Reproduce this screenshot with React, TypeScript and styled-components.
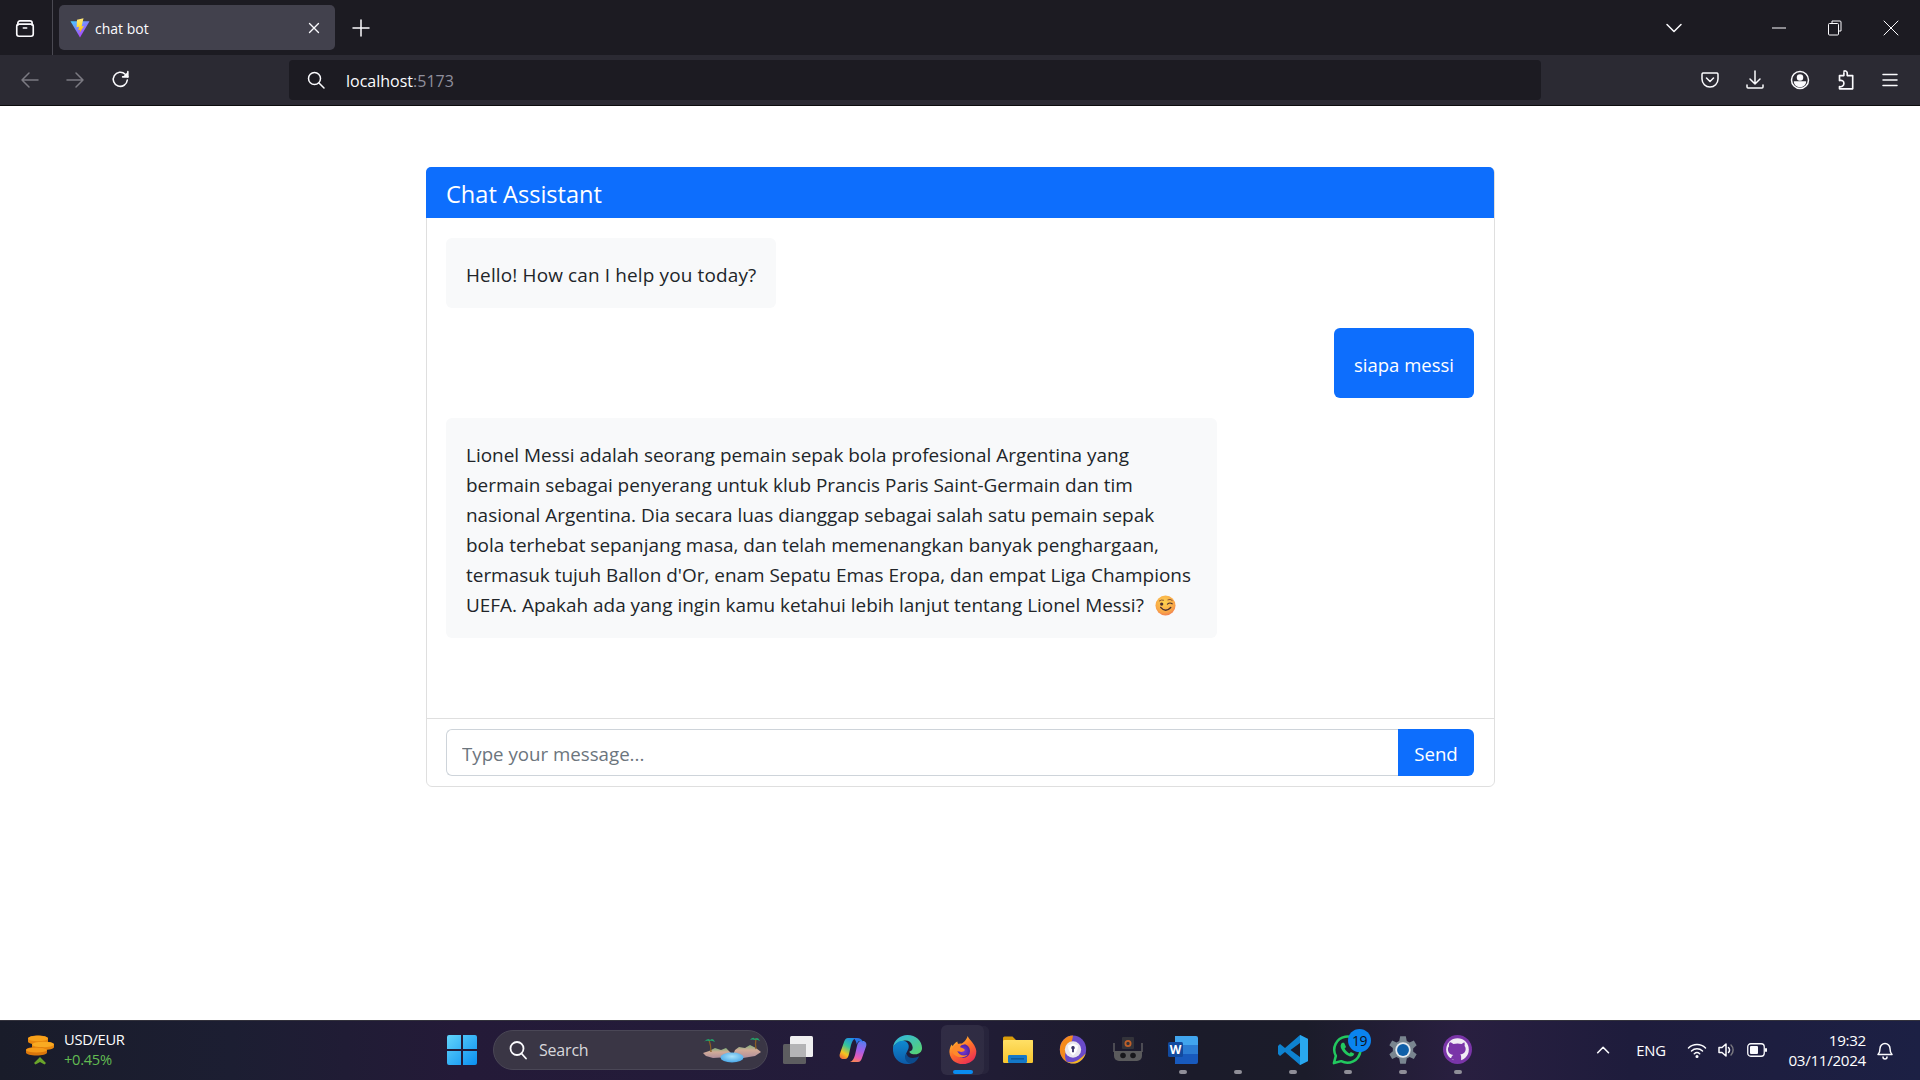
import React from "react";
import styled, { createGlobalStyle } from "styled-components";

const Global = createGlobalStyle`
  html, body { margin: 0; padding: 0; background: #fff; }
  * { box-sizing: border-box; }
  body { font-family: "Open Sans", "Liberation Sans", sans-serif; }
`;

const Screen = styled.div`
  width: 1920px; height: 1080px; display: flex; flex-direction: column; overflow: hidden;
`;

/* ---------- browser chrome ---------- */
const TabBar = styled.div`
  height: 55px; background: #1c1b22; display: flex; align-items: center; flex: none; color: #fbfbfe;
`;
const TabListButton = styled.div`
  width: 53px; height: 55px; display: flex; align-items: center; justify-content: center;
  border-right: 1px solid #4a4952; padding-right: 2px; flex: none;
`;
const Tab = styled.div`
  width: 276px; height: 45px; margin-left: 6px; background: #42414d; border-radius: 5px;
  display: flex; align-items: center; padding: 0 12px 0 11px; flex: none;
`;
const TabTitle = styled.span`
  font: 14px "Open Sans", sans-serif; margin: 2px 0 0 5px; flex: 1; color: #fbfbfe;
`;
const NewTab = styled.div`
  width: 44px; margin-left: 4px; display: flex; justify-content: center; flex: none;
`;
const TabSpacer = styled.div`flex: 1;`;
const WinButton = styled.div<{ $w: number }>`
  width: ${(p) => p.$w}px; display: flex; justify-content: center; flex: none;
`;
const Toolbar = styled.div`
  height: 51px; background: #2b2a33; display: flex; align-items: center; flex: none;
  border-bottom: 1px solid #0c0c0d; padding-bottom: 1px;
`;
const NavButton = styled.div<{ $w: number }>`
  width: ${(p) => p.$w}px; display: flex; justify-content: center; flex: none;
`;
const UrlBar = styled.div`
  width: 1252px; height: 40px; background: #1c1b22; border-radius: 4px; margin-left: 139px;
  display: flex; align-items: center; padding-left: 17px; flex: none;
`;
const UrlText = styled.span`
  margin: 2px 0 0 20px; font: 16px "Open Sans", sans-serif; color: #fbfbfe;
`;
const UrlPort = styled.span`color: #8f8f9d;`;
const ToolbarRight = styled.div`
  margin-left: auto; display: flex; align-items: center; padding-right: 8px;
`;

/* ---------- page ---------- */
const Page = styled.main`
  flex: 1; background: #fff; padding-top: 61px; display: flex; justify-content: center;
  align-items: flex-start; padding-left: 1px;
`;
const Card = styled.section`
  width: 1069px; border: 1px solid rgba(0,0,0,.125); border-radius: 6px;
  display: flex; flex-direction: column;
`;
const CardHeader = styled.header`
  height: 51px; background: #0d6efd; color: #fff; padding: 2px 20px 0;
  font-size: 23.6px; line-height: 51px; margin: -1px 0 0 -1px; border-radius: 5px 5px 0 0;
`;
const ChatBody = styled.div`
  height: 500px; padding: 20px 20px 20px 19px; display: flex; flex-direction: column; gap: 20px;
`;
const Bubble = styled.div<{ $user?: boolean; $wide?: boolean; $track?: number }>`
  align-self: ${(p) => (p.$user ? "flex-end" : "flex-start")};
  background: ${(p) => (p.$user ? "#0d6efd" : "#f8f9fa")};
  color: ${(p) => (p.$user ? "#fff" : "#212529")};
  padding: 22px 20px 18px; border-radius: 6px; font-size: ${(p) => (p.$user ? 18.5 : 18.95)}px; line-height: 30px;
  letter-spacing: ${(p) => p.$track ?? 0}px;
  white-space: nowrap; ${(p) => (p.$wide ? "width: 771px;" : "")}
`;
const Emoji = styled.svg`
  width: 21px; height: 21px; vertical-align: -4px; margin-left: 6px;
`;
const CardFooter = styled.footer`
  border-top: 1px solid rgba(0,0,0,.125); padding: 10px 20px 10px 19px; display: flex; height: 68px;
`;
const MessageInput = styled.input`
  flex: 1; height: 47px; border: 1px solid #ced4da; border-right: 0; border-radius: 6px 0 0 6px;
  padding: 2px 15px 0; font: 18.7px "Open Sans", sans-serif; outline: none; color: #212529; background: #fff;
  &::placeholder { color: #6c757d; opacity: 1; }
`;
const SendButton = styled.button`
  width: 76px; height: 47px; background: #0d6efd; color: #fff; border: 0; border-radius: 0 6px 6px 0;
  font: 18.7px "Open Sans", sans-serif; padding: 2px 0 0;
`;

/* ---------- taskbar ---------- */
const Taskbar = styled.footer`
  height: 60px; flex: none; display: flex; align-items: center; color: #fff; padding: 0 0 2px 20px;
  border-top: 1px solid #33323c;
  background: linear-gradient(90deg, #191c2a 0%, #1c1e32 12%, #241a38 24%, #231c3a 45%, #201c34 52%, #1b1b2a 62%, #1b1c2a 68%, #291f40 76%, #1e1c3c 85%, #1c2044 100%);
`;
const Widget = styled.div`
  width: 414px; display: flex; align-items: center; gap: 10px; flex: none; padding-left: 6px;
`;
const WidgetText = styled.div`
  display: flex; flex-direction: column; font: 14.7px/20px "Open Sans", sans-serif; letter-spacing: -.3px; margin-top: -1px;
`;
const WidgetDelta = styled.span`color: #62bb52;`;
const TaskSlot = styled.div<{ $active?: boolean }>`
  position: relative; width: 55px; height: 52px; display: flex; align-items: center; justify-content: center;
  flex: none; border-radius: 6px;
  ${(p) => p.$active ? "background: rgba(255,255,255,.07); width: 43px; height: 50px; margin: 0 6px; box-shadow: 6px 0 0 -1px rgba(255,255,255,.035);" : ""}
`;
const Indicator = styled.span<{ $active?: boolean }>`
  position: absolute; bottom: ${(p) => (p.$active ? 1 : 2)}px; left: 50%; transform: translateX(-50%);
  width: ${(p) => (p.$active ? 20 : 8)}px; height: 4px; border-radius: 2px;
  background: ${(p) => (p.$active ? "#0a8cf0" : "#8f8e98")};
`;
const Badge = styled.span`
  position: absolute; top: 5px; right: 4px; width: 23px; height: 23px; border-radius: 50%;
  background: #0a84ef; color: #101018; font: 14px/23px "Open Sans", sans-serif; text-align: center; letter-spacing: -.5px;
`;
const SearchPill = styled.div`
  width: 275px; height: 40px; border-radius: 20px; background: #3a3645; border: 1px solid #4a4756;
  display: flex; align-items: center; padding: 0 6px 0 14px; margin: 0 2px 0 4px; flex: none;
`;
const SearchLabel = styled.span`
  font: 16px "Open Sans", sans-serif; color: #d8d8dc; margin-left: 11px; flex: 1; letter-spacing: -.2px;
`;
const Tray = styled.div`
  margin-left: auto; display: flex; align-items: center;
`;
const TrayItem = styled.div<{ $w: number }>`
  width: ${(p) => p.$w}px; display: flex; justify-content: center; align-items: center; flex: none;
`;
const TrayLang = styled.span`
  font: 14.8px "Open Sans", sans-serif; letter-spacing: -.2px;
`;
const Clock = styled.div`
  width: 92px; text-align: right; font: 15.2px/20px "Open Sans", sans-serif; letter-spacing: -.3px; flex: none;
`;

/* ---------- icons ---------- */
const S = { fill: "none", stroke: "#fbfbfe", strokeWidth: 1.5, strokeLinecap: "round" as const, strokeLinejoin: "round" as const };
const Ic = ({ size = 20, children, stroke }: { size?: number; children: React.ReactNode; stroke?: string }) => (
  <svg width={size} height={size} viewBox="0 0 20 20" {...S} stroke={stroke ?? S.stroke}>{children}</svg>
);
const Vite = () => (
  <svg width={20} height={20} viewBox="0 0 20 20">
    <defs>
      <linearGradient id="v1" x1="0" y1="0" x2="0.7" y2="1"><stop offset="0" stopColor="#41d1ff" /><stop offset="1" stopColor="#bd34fe" /></linearGradient>
      <linearGradient id="v2" x1="0.4" y1="0" x2="0.5" y2="1"><stop offset="0" stopColor="#ffea83" /><stop offset=".5" stopColor="#ffdd35" /><stop offset="1" stopColor="#ffa800" /></linearGradient>
    </defs>
    <path d="M0.5 3.2 L19.5 3.2 L10 19.5 Z" fill="url(#v1)" />
    <path d="M13.5 0.3 L7 1.8 L6.6 9.2 L9 8.7 L8.3 12.2 L10.2 11.7 L9.6 15 L14 8 L11.6 8.4 Z" fill="url(#v2)" />
  </svg>
);
const Wink = () => (
  <Emoji viewBox="0 0 22 22">
    <defs><radialGradient id="w" cx=".45" cy=".35" r=".75"><stop offset="0" stopColor="#fdd34f" /><stop offset=".65" stopColor="#f9a648" /><stop offset="1" stopColor="#ec6a55" /></radialGradient></defs>
    <circle cx="11" cy="11" r="10.5" fill="url(#w)" />
    <circle cx="7" cy="9.5" r="1.7" fill="#4a3030" />
    <path d="M13 9.6 Q15.5 7.4 18 9.2" fill="none" stroke="#4a3030" strokeWidth="1.2" strokeLinecap="round" />
    <path d="M4.5 6.2 Q6.5 4.6 9 5.4 M13.5 5 Q16 3.8 18 5.6" fill="none" stroke="#7a4a30" strokeWidth=".9" strokeLinecap="round" />
    <path d="M6 13 Q11 19 16.5 13" fill="none" stroke="#4a3030" strokeWidth="1.5" strokeLinecap="round" />
  </Emoji>
);
const Coins = () => (
  <svg width={28} height={30} viewBox="0 0 28 30">
    <path d="M2 3.500C2 1.500 7 .5 12 .5s10 1 10 3v3c0 2-5 3-10 3s-10-1-10-3Z" fill="#e8870f" />
    <ellipse cx="12" cy="3.500" rx="10" ry="2.800" fill="#f8a21a" />
    <path d="M6 9.500c0-2 5-3 11-3s11 1 11 3v2.500c0 2-5 3-11 3s-11-1-11-3Z" fill="#e8870f" />
    <ellipse cx="17" cy="9.500" rx="11" ry="2.800" fill="#f9aa22" />
    <path d="M0 15c0-2 5-3 10.500-3s10.500 1 10.500 3v2.500c0 2-5 3-10.500 3S0 19.500 0 17.500Z" fill="#d9760c" />
    <ellipse cx="10.500" cy="15" rx="10.500" ry="2.600" fill="#f59a18" />
    <path d="M14 22l6 6-1.500 1.500-4.500-2.500-4.500 2.500L8 28Z" fill="#6aa52a" />
  </svg>
);
const WinLogo = () => (
  <svg width={30} height={30} viewBox="0 0 30 30">
    <defs><linearGradient id="wl" x1="0" y1="0" x2="1" y2="1"><stop offset="0" stopColor="#62d4fb" /><stop offset="1" stopColor="#0a8ff0" /></linearGradient></defs>
    <path d="M0 2a2 2 0 0 1 2-2h12v14H0zM16 0h12a2 2 0 0 1 2 2v12H16zM0 16h14v14H2a2 2 0 0 1-2-2zM16 16h14v12a2 2 0 0 1-2 2H16z" fill="url(#wl)" />
  </svg>
);
const Island = () => (
  <svg width={58} height={26} viewBox="0 0 58 26">
    <defs>
      <linearGradient id="is" x1="0" y1="0" x2="0" y2="1"><stop offset="0" stopColor="#7fb07a" /><stop offset=".4" stopColor="#d2ab98" /><stop offset="1" stopColor="#b08f9c" /></linearGradient>
      <radialGradient id="po" cx=".5" cy=".4" r=".6"><stop offset="0" stopColor="#a8e2fb" /><stop offset="1" stopColor="#4aa8e8" /></radialGradient>
    </defs>
    <path d="M0 16 L6 14 L12 11 L18 13 L23 11 L28 16 L26 20 L10 21 L3 19 Z" fill="url(#is)" />
    <path d="M32 13 L36 10 L42 11 L47 8 L53 11 L58 15 L52 19 L40 21 L30 18 Z" fill="url(#is)" />
    <ellipse cx="29" cy="20.500" rx="11.500" ry="5" fill="url(#po)" />
    <path d="M8 15 Q8 8 6 3 M53 12 Q52 7 53 1" fill="none" stroke="#8a5e24" strokeWidth="1.300" />
    <path d="M1 5 Q5 0 7 3 Q10 0 12 5 Q8 3 6 4 Q3 3 1 5Z M47 3 Q50 -1 52 2 Q55 -1 57 4 Q53 2 52 3 Q49 2 47 3Z" fill="#21a06a" />
  </svg>
);
const FileStack = () => (
  <svg width={30} height={28} viewBox="0 0 30 28">
    <rect x="0" y="8" width="23" height="20" rx="1.500" fill="#5d5d60" />
    <rect x="7" y="0" width="23" height="21" rx="1.500" fill="#efeff0" />
    <path d="M7 8h16v13H8.500A1.500 1.500 0 0 1 7 19.500Z" fill="#b4b4b6" />
  </svg>
);
const Copilot = () => (
  <svg width={28} height={28} viewBox="0 0 28 28">
    <defs>
      <linearGradient id="c1" x1=".7" y1="0" x2=".2" y2="1"><stop offset="0" stopColor="#1e8fe8" /><stop offset=".4" stopColor="#35c49a" /><stop offset=".75" stopColor="#f5c51f" /><stop offset="1" stopColor="#f0703a" /></linearGradient>
      <linearGradient id="c2" x1=".6" y1="0" x2=".4" y2="1"><stop offset="0" stopColor="#5a7df0" /><stop offset=".45" stopColor="#a45ee8" /><stop offset=".8" stopColor="#ea5cb0" /><stop offset="1" stopColor="#f4845a" /></linearGradient>
    </defs>
    <path d="M19 26H11c3-1 4-4 5-7l2-9c.5-3 2-5 4-5h2c2.500 0 4 2.500 3.200 5L23 22c-1 2.500-2 4-4 4Z" fill="url(#c2)" />
    <path d="M9 2h8c-3 1-4 4-5 7l-2 9c-.5 3-2 5-4 5H4c-2.500 0-4-2.500-3.200-5L5 6c1-2.500 2-4 4-4Z" fill="url(#c1)" />
    <path d="M14 2h4c3 0 5 1.500 6 4l.3 1c-.8-1.500-2-2.200-3.500-2-1.500.2-2.500 1.500-3 3.500C17 5 16 2.800 14 2Z" fill="#2a74e8" />
  </svg>
);
const Edge = () => (
  <svg width={31} height={31} viewBox="0 0 32 32">
    <defs>
      <linearGradient id="e1" x1="0" y1="0" x2="1" y2="1"><stop offset="0" stopColor="#2fb4e8" /><stop offset="1" stopColor="#5ad66a" /></linearGradient>
      <linearGradient id="e2" x1="0" y1="0" x2="0" y2="1"><stop offset="0" stopColor="#0f8ad0" /><stop offset="1" stopColor="#0d5aa8" /></linearGradient>
    </defs>
    <path d="M1 14C2 6 8.500 1 16 1c8.500 0 15 6 15 13.500 0 4-3 6.500-7 6.500-3 0-6-1-6-3 3-1 4-3 3-6-1-4-5-6-9-5-5 1-9 3-11 7Z" fill="url(#e1)" />
    <path d="M1 14c2-4 6-7 10-7 4 0 7.500 3.500 6 8-1 3-3 5-3 8 0 3 2 6 6 7.500-2 .5-3 .5-4 .5C6 31 .5 24 1 14Z" fill="url(#e2)" />
    <path d="M15 20c1 5 7 6 13 3-2 5-6 8-9 7.500-5-1-7-6.500-4-10.500Z" fill="#0c4a8c" />
  </svg>
);
const Firefox = () => (
  <svg width={30} height={30} viewBox="0 0 32 32">
    <defs>
      <linearGradient id="f1" x1="0.2" y1="0" x2="0.8" y2="1"><stop offset="0" stopColor="#ffcb2e" /><stop offset=".5" stopColor="#ff6b2c" /><stop offset="1" stopColor="#e8285a" /></linearGradient>
      <radialGradient id="f2" cx=".5" cy=".5" r=".5"><stop offset="0" stopColor="#7b3fd1" /><stop offset="1" stopColor="#4a1fa8" /></radialGradient>
    </defs>
    <path d="M21 1c1 3 3 4 5 7 3 4 5 8 4 12-1 7-7 11-14 11C8 31 2 26 1.500 18c0-3 1-6 2.500-8l1 2c1-2 3-4 5-5 0 2 1 3 2 4 3-2 7-4 9-10Z" fill="url(#f1)" />
    <circle cx="16" cy="17" r="7.500" fill="url(#f2)" />
    <path d="M6 12c3-3 8-4 12-2-3 0-5 1-5 3 2 1 4 1 5 3-2 3-6 2-8 1 1 4 6 6 11 4-5 5-13 3-16-2-1-2 0-5 1-7Z" fill="#ff8a2a" />
  </svg>
);
const Folder = () => (
  <svg width={30} height={27} viewBox="0 0 30 27">
    <defs><linearGradient id="fo" x1="0" y1="0" x2="0" y2="1"><stop offset="0" stopColor="#ffe066" /><stop offset="1" stopColor="#f7c52e" /></linearGradient></defs>
    <path d="M0 2a1.500 1.500 0 0 1 1.500-1.500h8L13 4h17v6H0Z" fill="#d99c0a" />
    <rect x="0" y="4" width="30" height="23" rx="1.200" fill="url(#fo)" />
    <rect x="5" y="19" width="19" height="8" rx="1.200" fill="#1478c8" />
    <rect x="8" y="22" width="13" height="1.600" fill="#0c5a9c" />
  </svg>
);
const Avast = () => (
  <svg width={28} height={29} viewBox="0 0 30 32">
    <ellipse cx="15" cy="16" rx="14.500" ry="15.500" fill="#6a4bc8" />
    <path d="M15 .5C7 .5 .5 7.500 .5 16c0 6 3 11 8 14-3-4-3-10 0-14 2-3 5-5 6.500-15.500Z" fill="#f48a1c" />
    <path d="M29 20c-2 7-8 11.500-14 11.500-3 0-5-1-7-2 7 2 15-2 21-9.500Z" fill="#f5b81f" />
    <circle cx="15" cy="16" r="9" fill="#e8e6ee" />
    <path d="M15 9.500l5.500 2c0 5-2 8.500-5.500 11-3.500-2.500-5.500-6-5.500-11Z" fill="#fff" />
    <path d="M15 12a2 2 0 0 1 1 3.700V19h-2v-3.300A2 2 0 0 1 15 12Z" fill="#3b3468" />
  </svg>
);
const Robot = () => (
  <svg width={30} height={26} viewBox="0 0 30 26">
    <rect x="9" y="0" width="12" height="12" rx="1" fill="#33333a" />
    <circle cx="15" cy="6.500" r="2.600" fill="none" stroke="#c0602a" strokeWidth="1.800" />
    <path d="M1 6v9M29 6v9" stroke="#5c5c60" strokeWidth="1.500" />
    <path d="M1 14h28v5a5 5 0 0 1-5 5H6a5 5 0 0 1-5-5Z" fill="#5a5a5c" />
    <circle cx="10" cy="18.500" r="2.800" fill="#18181c" /><circle cx="20" cy="18.500" r="2.800" fill="#18181c" />
  </svg>
);
const Word = () => (
  <svg width={30} height={28} viewBox="0 0 30 28">
    <path d="M7 0h21a2 2 0 0 1 2 2v7H7Z" fill="#41a5ee" />
    <rect x="7" y="9" width="23" height="9" fill="#2b7cd3" />
    <path d="M7 18h23v8a2 2 0 0 1-2 2H7Z" fill="#185abd" />
    <rect x="0" y="6" width="15" height="15" rx="1.500" fill="#124a9e" />
    <text x="7.500" y="18" fontFamily="Open Sans" fontSize="12" fontWeight="700" fill="#fff" textAnchor="middle">W</text>
  </svg>
);
const VSCode = () => (
  <svg width={32} height={32} viewBox="0 0 32 32">
    <path d="M23 1 L31 5 V27 L23 31 L8 18 L3 22 L1 20 V12 L3 10 L8 14 Z M23 9 L13.500 16 L23 23 Z" fill="#0e82cf" fillRule="evenodd" />
    <path d="M23 1 L31 5 V27 L23 31 Z" fill="#29a8ef" />
  </svg>
);
const WhatsApp = () => (
  <svg width={33} height={33} viewBox="0 0 34 34">
    <path d="M3 31 L5 23.500 A13.500 13.500 0 1 1 10.500 29 Z" fill="none" stroke="#22c95f" strokeWidth="2.600" strokeLinejoin="round" />
    <path d="M12 10c-1 0-2.500 2-2 4.500 1 4 5 8 9 9.500 2.500 .8 4.500-.5 5-2.500l-3.500-2-1.500 1.500c-2-.8-4-3-5-5l1.500-1.500L13.500 10Z" fill="#22c95f" />
  </svg>
);
const Gear = () => (
  <svg width={32} height={32} viewBox="0 0 34 34">
    <path d="M14 1h6l1 5 3 1.500 4.500-2 3 5-3.700 3.300v3.400L31.500 20l-3 5-4.500-2-3 1.500-1 5.500h-6l-1-5.500-3-1.500-4.500 2-3-5 3.700-3.300v-3.400L2.500 10.500l3-5 4.500 2L13 6Z" fill="#79858f" transform="translate(0 1.500)" />
    <circle cx="17" cy="17" r="8.200" fill="#e4e9ee" /><circle cx="17" cy="17" r="6.300" fill="#0f5fa8" />
  </svg>
);
const GhDesktop = () => (
  <svg width={29} height={29} viewBox="0 0 32 32">
    <circle cx="16" cy="16" r="16" fill="#7a35a8" />
    <circle cx="16" cy="16" r="12.500" fill="#f0ecf4" />
    <path d="M8.500 8l3 2c3-.8 6-.8 9 0l3-2c.6 1.500.6 3 .3 4 1 1 1.200 2.500 1.200 3.500 0 4-3 5.500-6 6 .7.6 1 1.500 1 2.500v5a13 13 0 0 1-8.500 0V27c-2.500 .5-4 0-5-2.500 0 0 1.500 .8 2.500 1 .3-1.500 1-2.800 2.500-3.500-3-.5-6-2-6-6 0-1 .2-2.500 1.200-3.500-.3-1-.3-2.500.3-4Z" fill="#7a35a8" />
  </svg>
);

const taskIcons: { key: string; el: React.ReactNode; dot?: boolean; badge?: string; active?: boolean }[] = [
  { key: "files", el: <FileStack /> },
  { key: "copilot", el: <Copilot /> },
  { key: "edge", el: <Edge /> },
  { key: "firefox", el: <Firefox />, active: true },
  { key: "folder", el: <Folder /> },
  { key: "avast", el: <Avast /> },
  { key: "robot", el: <Robot /> },
  { key: "word", el: <Word />, dot: true },
  { key: "blank", el: null, dot: true },
  { key: "vscode", el: <VSCode />, dot: true },
  { key: "whatsapp", el: <WhatsApp />, dot: true, badge: "19" },
  { key: "settings", el: <Gear />, dot: true },
  { key: "github", el: <GhDesktop />, dot: true },
];

export default function App() {
  return (
    <Screen>
      <Global />
      <TabBar>
        <TabListButton>
          <Ic size={22}>
            <path d="M3.500 7.500V5.500A2 2 0 0 1 5.500 3.500h9a2 2 0 0 1 2 2v2" />
            <rect x="2.500" y="6.500" width="15" height="11" rx="2" />
            <path d="M8.500 10h3" />
          </Ic>
        </TabListButton>
        <Tab>
          <Vite />
          <TabTitle>chat bot</TabTitle>
          <Ic size={18}><path d="M5 5l10 10M15 5L5 15" /></Ic>
        </Tab>
        <NewTab><Ic size={20}><path d="M10 2v16M2 10h16" /></Ic></NewTab>
        <TabSpacer />
        <WinButton $w={40}><Ic size={20}><path d="M3 6.500l7 7 7-7" /></Ic></WinButton>
        <WinButton $w={65} />
        <WinButton $w={40}><svg width={14} height={2} viewBox="0 0 14 2"><path d="M0 1h14" stroke="#fbfbfe" strokeWidth="1" /></svg></WinButton>
        <WinButton $w={72}><svg width={14} height={16} viewBox="0 0 14 16" fill="none" stroke="#fbfbfe"><path d="M4 3V1h8a1 1 0 0 1 1 1v9h-2" /><rect x=".5" y="3.500" width="10" height="11.500" rx="1" /></svg></WinButton>
        <WinButton $w={40}><Ic size={20}><path d="M3 3l14 14M17 3L3 17" strokeWidth="1" /></Ic></WinButton>
        <WinButton $w={9} />
      </TabBar>
      <Toolbar>
        <NavButton $w={60}><Ic size={20} stroke="#7b7a82"><path d="M18 10H2M9 3l-7 7 7 7" /></Ic></NavButton>
        <NavButton $w={30}><Ic size={20} stroke="#7b7a82"><path d="M2 10h16M11 3l7 7-7 7" /></Ic></NavButton>
        <NavButton $w={60}><Ic size={21}><path d="M16.500 10.500a6.700 6.700 0 1 1-2-5.500l2.500 2.500" /><path d="M17 2.500v5h-5" fill="#fbfbfe" /></Ic></NavButton>
        <UrlBar>
          <Ic size={20}><circle cx="8.500" cy="8.500" r="6" /><path d="M13 13l5 5" /></Ic>
          <UrlText>localhost<UrlPort>:5173</UrlPort></UrlText>
        </UrlBar>
        <ToolbarRight>
          <NavButton $w={45}><Ic size={20}><path d="M3 3h14a1.500 1.500 0 0 1 1 1.500V9a8 8 0 0 1-16 0V4.500A1.500 1.500 0 0 1 3 3Z" /><path d="M6.500 8l3.500 3.500L13.500 8" /></Ic></NavButton>
          <NavButton $w={45}><Ic size={20}><path d="M10 1v13M5 9l5 5 5-5M2 15v2a1 1 0 0 0 1 1h14a1 1 0 0 0 1-1v-2" /></Ic></NavButton>
          <NavButton $w={46}><Ic size={20}><circle cx="10" cy="10" r="8.500" /><circle cx="10" cy="7.500" r="2.500" fill="#fbfbfe" /><path d="M4.500 12h11c-.5 3-3 4.500-5.500 4.500S5 15 4.500 12Z" fill="#fbfbfe" /></Ic></NavButton>
          <NavButton $w={44}><Ic size={22}><path d="M9 2a2 2 0 0 1 3 1.500V6h5v12H5v-2c2.500 .5 4-1 4-3s-1.500-3-4-2.500V6h4V3.500" /></Ic></NavButton>
          <NavButton $w={45}><Ic size={20}><path d="M3 4.500h14M3 10h14M3 15.500h14" /></Ic></NavButton>
        </ToolbarRight>
      </Toolbar>
      <Page>
        <Card>
          <CardHeader>Chat Assistant</CardHeader>
          <ChatBody>
            <Bubble $track={0.15}>Hello! How can I help you today?</Bubble>
            <Bubble $user>siapa messi</Bubble>
            <Bubble $wide>
              Lionel Messi adalah seorang pemain sepak bola profesional Argentina yang<br />
              bermain sebagai penyerang untuk klub Prancis Paris Saint-Germain dan tim<br />
              nasional Argentina. Dia secara luas dianggap sebagai salah satu pemain sepak<br />
              bola terhebat sepanjang masa, dan telah memenangkan banyak penghargaan,<br />
              termasuk tujuh Ballon d'Or, enam Sepatu Emas Eropa, dan empat Liga Champions<br />
              UEFA. Apakah ada yang ingin kamu ketahui lebih lanjut tentang Lionel Messi? <Wink />
            </Bubble>
          </ChatBody>
          <CardFooter>
            <MessageInput placeholder="Type your message..." />
            <SendButton>Send</SendButton>
          </CardFooter>
        </Card>
      </Page>
      <Taskbar>
        <Widget>
          <Coins />
          <WidgetText>USD/EUR<WidgetDelta>+0.45%</WidgetDelta></WidgetText>
        </Widget>
        <TaskSlot><WinLogo /></TaskSlot>
        <SearchPill>
          <Ic size={20}><circle cx="9" cy="8.500" r="6.500" strokeWidth="1.800" /><path d="M13.500 13.500l4.500 5" strokeWidth="1.800" /></Ic>
          <SearchLabel>Search</SearchLabel>
          <Island />
        </SearchPill>
        {taskIcons.map((t) => (
          <TaskSlot key={t.key} $active={t.active}>
            {t.el}
            {t.badge && <Badge>{t.badge}</Badge>}
            {(t.dot || t.active) && <Indicator $active={t.active} />}
          </TaskSlot>
        ))}
        <Tray>
          <TrayItem $w={32}><Ic size={18}><path d="M3 13l6-6 6 6" strokeWidth="1.800" /></Ic></TrayItem>
          <TrayItem $w={62}><TrayLang>ENG</TrayLang></TrayItem>
          <TrayItem $w={30}><Ic size={20}><path d="M1.500 8a12 12 0 0 1 17 0M4.500 11a8 8 0 0 1 11 0M7.300 13.800a4 4 0 0 1 5.400 0" /><circle cx="10" cy="16.500" r=".8" fill="#fbfbfe" /></Ic></TrayItem>
          <TrayItem $w={28}><Ic size={20}><path d="M3 7.500h3l4-3.500v12l-4-3.500H3Z" /><path d="M12.500 7.500a3.500 3.500 0 0 1 0 5" /><path d="M15 5a7 7 0 0 1 0 10" stroke="#77767e" /></Ic></TrayItem>
          <TrayItem $w={34}><svg width={20} height={14} viewBox="0 0 20 14"><rect x=".75" y=".75" width="16.500" height="12.500" rx="3" fill="none" stroke="#fbfbfe" strokeWidth="1.300" /><rect x="3" y="3" width="8" height="8" rx="1" fill="#fbfbfe" /><rect x="18" y="5" width="2" height="4" rx="1" fill="#fbfbfe" /></svg></TrayItem>
          <Clock>19:32<br />03/11/2024</Clock>
          <TrayItem $w={38}><Ic size={20}><path d="M3 14.500c1.500-1.500 2-3 2-6a5 5 0 0 1 10 0c0 3 .5 4.500 2 6Z" /><path d="M8 17a2 2 0 0 0 4 0" /></Ic></TrayItem>
          <TrayItem $w={16} />
        </Tray>
      </Taskbar>
    </Screen>
  );
}
